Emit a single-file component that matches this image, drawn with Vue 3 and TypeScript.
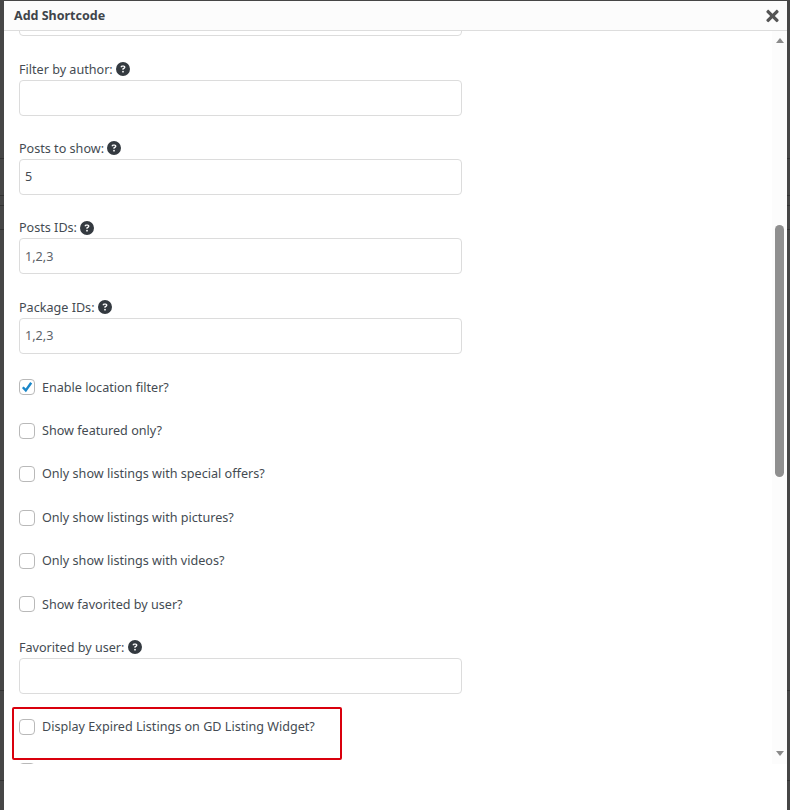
<script setup lang="ts">
interface Field {
  kind: 'input' | 'check'
  label: string
  value?: string
  placeholder?: string
  checked?: boolean
  help?: boolean
  marked?: boolean
}

const fields: Field[] = [
  { kind: 'input', label: '' },
  { kind: 'input', label: 'Filter by author:', help: true },
  { kind: 'input', label: 'Posts to show:', value: '5', help: true },
  { kind: 'input', label: 'Posts IDs:', placeholder: '1,2,3', help: true },
  { kind: 'input', label: 'Package IDs:', placeholder: '1,2,3', help: true },
  { kind: 'check', label: 'Enable location filter?', checked: true },
  { kind: 'check', label: 'Show featured only?' },
  { kind: 'check', label: 'Only show listings with special offers?' },
  { kind: 'check', label: 'Only show listings with pictures?' },
  { kind: 'check', label: 'Only show listings with videos?' },
  { kind: 'check', label: 'Show favorited by user?' },
  { kind: 'input', label: 'Favorited by user:', help: true },
  { kind: 'check', label: 'Display Expired Listings on GD Listing Widget?', marked: true },
  { kind: 'check', label: '' },
]
</script>

<template>
  <div class="backdrop">
    <section class="modal">
      <header class="modal-head">
        <h2 class="modal-title">Add Shortcode</h2>
        <button class="close" type="button" aria-label="Close">
          <svg viewBox="0 0 352 512" width="13" height="18" fill="currentColor">
            <path d="M242.72 256l100.07-100.07c12.28-12.28 12.28-32.19 0-44.48l-22.24-22.24c-12.28-12.28-32.19-12.28-44.48 0L176 189.28 75.93 89.21c-12.28-12.28-32.19-12.28-44.48 0L9.21 111.45c-12.28 12.28-12.28 32.19 0 44.48L109.28 256 9.21 356.07c-12.28 12.28-12.28 32.19 0 44.48l22.24 22.24c12.28 12.28 32.2 12.28 44.48 0L176 322.72l100.07 100.07c12.28 12.28 32.2 12.28 44.48 0l22.24-22.24c12.28-12.28 12.28-32.19 0-44.48L242.72 256z" />
          </svg>
        </button>
      </header>
      <div class="modal-main">
        <div class="viewport">
          <form class="form">
            <div v-for="(f, i) in fields" :key="i" class="group" :class="{ marked: f.marked }">
              <template v-if="f.kind === 'input'">
                <label class="label">
                  {{ f.label }}
                  <svg v-if="f.help" class="help" viewBox="0 0 512 512" width="14" height="14" fill="currentColor">
                    <path d="M256 512A256 256 0 1 0 256 0a256 256 0 1 0 0 512zM169.8 165.3c7.9-22.3 29.1-37.3 52.8-37.3h58.3c34.9 0 63.1 28.3 63.1 63.1c0 22.6-12.1 43.5-31.7 54.8L280 264.4c-.2 13-10.9 23.6-24 23.6c-13.3 0-24-10.7-24-24V250.5c0-8.6 4.6-16.5 12.1-20.8l44.3-25.4c4.7-2.7 7.6-7.7 7.6-13.1c0-8.4-6.8-15.1-15.1-15.1H222.6c-3.4 0-6.4 2.1-7.5 5.3l-.4 1.2c-4.4 12.5-18.2 19-30.6 14.6s-19-18.2-14.6-30.6l.4-1.2zM224 352a32 32 0 1 1 64 0 32 32 0 1 1 -64 0z" />
                  </svg>
                </label>
                <input class="text" type="text" :value="f.value" :placeholder="f.placeholder" />
              </template>
              <label v-else class="check-row">
                <span class="box" :class="{ on: f.checked }">
                  <svg v-if="f.checked" viewBox="0 0 16 16" width="16" height="16">
                    <path d="M3.8 8.2 6.8 11.4 12.2 3.8" fill="none" stroke="#1a87c9" stroke-width="2.4" />
                  </svg>
                </span>
                <span>{{ f.label }}</span>
              </label>
            </div>
          </form>
        </div>
        <div class="scrollbar">
          <span class="arrow up"></span>
          <span class="thumb"></span>
          <span class="arrow down"></span>
        </div>
      </div>
    </section>
  </div>
</template>

<style scoped>
.backdrop {
  height: 810px;
  box-sizing: border-box;
  padding: 1px 3px 0 4px;
  background-color: #464646;
  background-image:
    linear-gradient(#333, #333), linear-gradient(#333, #333), linear-gradient(#333, #333),
    linear-gradient(#333, #333), linear-gradient(#333, #333), linear-gradient(#333, #333);
  background-size: 100% 1px;
  background-repeat: no-repeat;
  background-position: 0 158px, 0 195px, 0 205px, 0 229px, 0 690px, 0 780px;
  overflow: hidden;
  font-family: "Noto Sans", "Open Sans", sans-serif;
  font-size: 12.6px;
  line-height: 19.5px;
  color: #444b52;
}
.modal {
  height: 809px;
  display: flex;
  flex-direction: column;
  background: #fff;
}
.modal-head {
  flex: none;
  height: 29px;
  display: flex;
  align-items: center;
  justify-content: space-between;
  padding: 0 8px 0 10px;
  background: #fcfcfc;
  border-bottom: 1px solid #dddddd;
}
.modal-title {
  margin: 0;
  font-size: 12.5px;
  font-weight: 700;
  color: #3f454b;
}
.close {
  display: flex;
  padding: 0;
  border: 0;
  background: none;
  color: #555;
}
.modal-main {
  flex: none;
  height: 733px;
  display: flex;
}
.viewport {
  flex: 1;
  min-width: 0;
  overflow: hidden;
}
.form {
  margin-top: -50.8px;
  padding: 0 15px;
}
.group {
  position: relative;
  margin-bottom: 23.9px;
}
.label {
  display: block;
  height: 19.5px;
  margin-top: -0.5px;
  padding-bottom: 0.5px;
  white-space: nowrap;
}
.help {
  vertical-align: -2.5px;
  margin-left: 0;
  color: #343a40;
}
.text {
  display: block;
  box-sizing: border-box;
  width: 443px;
  height: 36px;
  padding: 0 5px;
  border: 1px solid #dcdcdc;
  border-radius: 4px;
  background: #fff;
  font: inherit;
  font-size: 12.6px;
  color: #444b52;
  outline: none;
}
.text::placeholder {
  color: #5c6369;
  opacity: 1;
}
.check-row {
  display: flex;
  align-items: center;
  gap: 7px;
  height: 19.5px;
}
.box {
  flex: none;
  box-sizing: border-box;
  width: 16px;
  height: 16px;
  border: 1px solid #b9b9b9;
  border-radius: 4px;
  background: #fff;
  display: flex;
  align-items: center;
  justify-content: center;
}
.box svg {
  flex: none;
}
.marked::after {
  content: "";
  position: absolute;
  left: -7px;
  top: -10px;
  width: 330px;
  height: 53px;
  box-sizing: border-box;
  border: 2px solid #d9000d;
  border-radius: 2px;
  pointer-events: none;
}
.scrollbar {
  flex: none;
  width: 15px;
  box-sizing: border-box;
  display: flex;
  flex-direction: column;
  align-items: center;
  background: #fcfcfc;
  padding: 7px 0 6px;
}
.arrow {
  flex: none;
  width: 0;
  height: 0;
  border-left: 4.5px solid transparent;
  border-right: 4.5px solid transparent;
}
.arrow.up {
  border-bottom: 5px solid #8a8a8a;
}
.arrow.down {
  margin-top: auto;
  margin-bottom: 2px;
  border-top: 5px solid #8a8a8a;
}
.thumb {
  flex: none;
  width: 9px;
  height: 252px;
  margin-top: 182px;
  border-radius: 5px;
  background: #8f8f8f;
}
</style>

<style>
html,
body {
  margin: 0;
  background: #464646;
}
</style>
